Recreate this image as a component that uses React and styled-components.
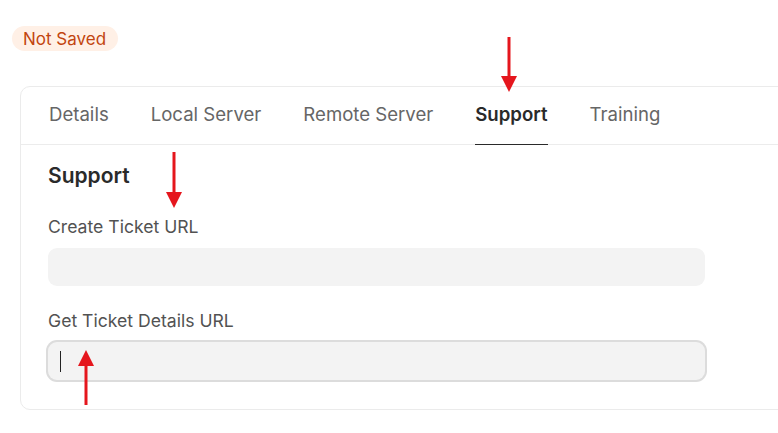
import React from 'react';
import styled, { createGlobalStyle } from 'styled-components';

const GlobalStyle = createGlobalStyle`
  html, body {
    margin: 0;
    padding: 0;
    background: #fff;
    overflow: hidden;
    font-family: Inter, "Noto Sans", sans-serif;
  }
`;

const Page = styled.div`
  position: relative;
  width: 778px;
  height: 433px;
  overflow: hidden;
  padding: 26px 0 0 12px;
  box-sizing: border-box;
`;

const Pill = styled.span`
  display: inline-flex;
  align-items: center;
  height: 25px;
  padding: 0 12px 0 11px;
  border-radius: 13px;
  background: #fff0e6;
  color: #c2450f;
  font-size: 17px;
`;

const Card = styled.div`
  margin: 35px 0 0 8px;
  width: 820px;
  border: 1px solid #ebebeb;
  border-radius: 10px;
  box-sizing: border-box;
`;

const TabBar = styled.div`
  display: flex;
  gap: 42px;
  height: 57px;
  padding-left: 28px;
  border-bottom: 1px solid #ececec;
`;

const Tab = styled.div`
  display: flex;
  align-items: center;
  padding-bottom: 3px;
  font-size: 18.6px;
  color: ${p => (p.active ? '#2a2a2a' : '#666666')};
  font-weight: ${p => (p.active ? 600 : 400)};
  border-bottom: ${p => (p.active ? '1.5px solid #2a2a2a' : '1.5px solid transparent')};
  margin-bottom: -1px;
`;

const Section = styled.div`
  padding: 17px 0 29px 27px;
`;

const Heading = styled.h3`
  margin: 0 0 25px;
  font-size: 21px;
  line-height: 28px;
  font-weight: 600;
  color: #2a2a2a;
`;

const Field = styled.div`
  display: flex;
  flex-direction: column;
  gap: 9px;
  & + & {
    margin-top: 23px;
  }
`;

const Label = styled.label`
  font-size: 17.6px;
  line-height: 24px;
  color: #525252;
`;

const Input = styled.div`
  position: relative;
  width: 657px;
  height: 38px;
  border-radius: 9px;
  background: #f3f3f3;
  box-shadow: ${p => (p.focused ? '0 0 0 2px #dcdcdc' : 'none')};
`;

const Caret = styled.span`
  position: absolute;
  left: 12px;
  top: 9px;
  width: 1px;
  height: 21px;
  background: #222;
`;

const Arrow = styled.svg`
  position: absolute;
  left: ${p => p.x - 9}px;
  top: ${p => p.y}px;
  overflow: visible;
`;

const RedArrow = ({ x, y, len, up }) => (
  <Arrow x={x} y={y} width="18" height={len} viewBox={`0 0 18 ${len}`}>
    {up ? (
      <>
        <line x1="9" y1={len} x2="9" y2="14" stroke="#e5161d" strokeWidth="3" />
        <polygon points="1,16 17,16 9,0" fill="#e5161d" />
      </>
    ) : (
      <>
        <line x1="9" y1="0" x2="9" y2={len - 14} stroke="#e5161d" strokeWidth="3" />
        <polygon points={`1,${len - 16} 17,${len - 16} 9,${len}`} fill="#e5161d" />
      </>
    )}
  </Arrow>
);

const tabs = ['Details', 'Local Server', 'Remote Server', 'Support', 'Training'];

export default function App() {
  return (
    <Page>
      <GlobalStyle />
      <Pill>Not Saved</Pill>
      <Card>
        <TabBar>
          {tabs.map(t => (
            <Tab key={t} active={t === 'Support'}>{t}</Tab>
          ))}
        </TabBar>
        <Section>
          <Heading>Support</Heading>
          <Field>
            <Label>Create Ticket URL</Label>
            <Input />
          </Field>
          <Field>
            <Label>Get Ticket Details URL</Label>
            <Input focused>
              <Caret />
            </Input>
          </Field>
        </Section>
      </Card>
      <RedArrow x={509} y={37} len={55} />
      <RedArrow x={174} y={152} len={56} />
      <RedArrow x={86} y={350} len={55} up />
    </Page>
  );
}
